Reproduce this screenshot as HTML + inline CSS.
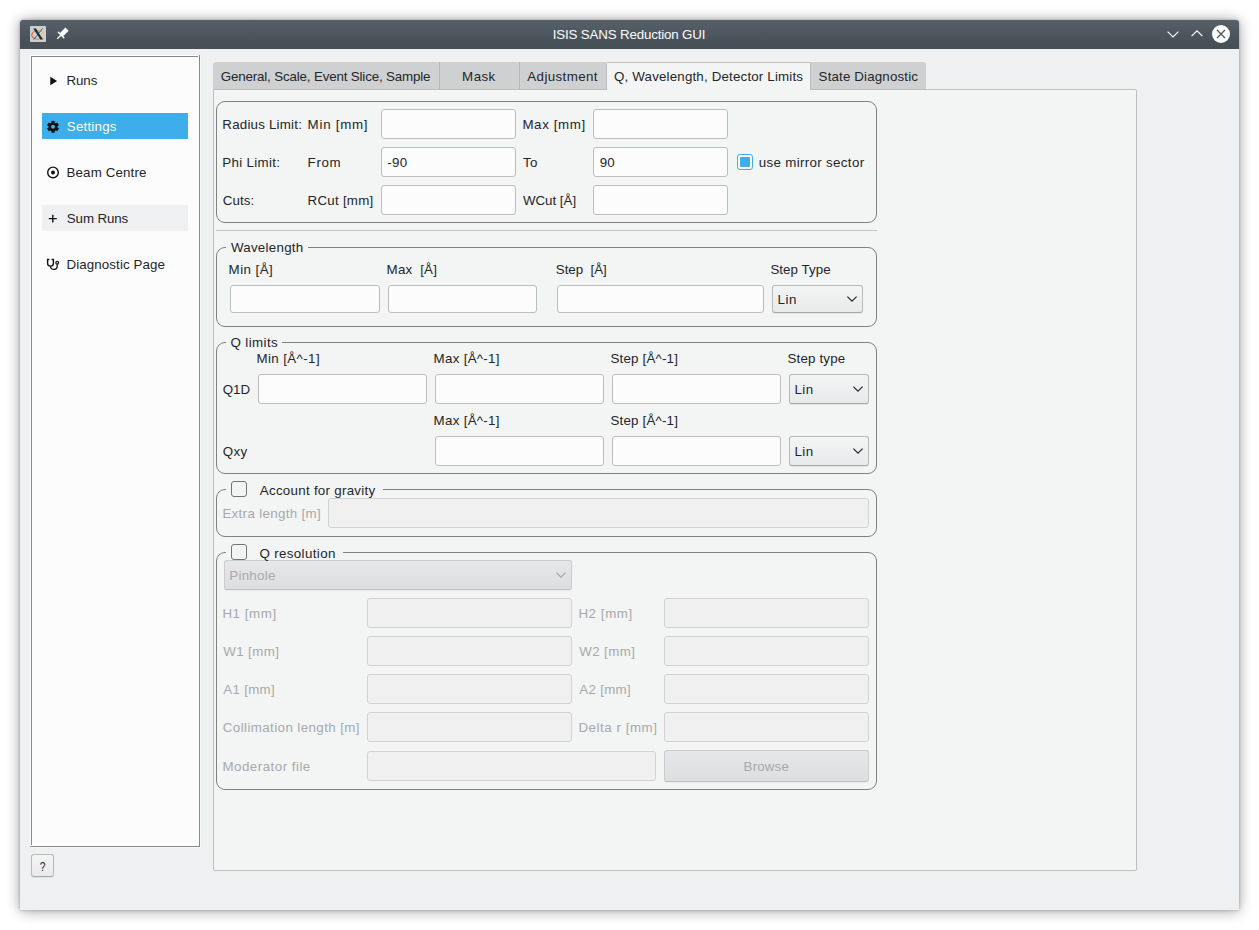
<!DOCTYPE html><html><head><meta charset="utf-8"><title>ISIS SANS Reduction GUI</title><style>
*{box-sizing:border-box}
html,body{margin:0;padding:0}
body{width:1259px;height:930px;overflow:hidden;background:#fff;position:relative;font-family:'Liberation Sans', 'DejaVu Sans', sans-serif;font-size:13.33px;color:#232629}
.a{position:absolute}
.t{position:absolute;line-height:16px;height:16px;white-space:pre}
.win{left:20px;top:20px;width:1219px;height:890px;background:#eff0f1;border-radius:3px 3px 0 0;box-shadow:0 0 14px rgba(0,0,0,.33),0 0 3px rgba(0,0,0,.27),0 4px 16px rgba(0,0,0,.07)}
.tb{left:20px;top:20px;width:1219px;height:29px;border-radius:3px 3px 0 0;background:linear-gradient(#566069 0%,#475057 80%)}
.le{position:absolute;background:#fcfcfc;border:1px solid #bcbdbe;border-radius:3px}
.led{position:absolute;background:#f0f0f0;border:1px solid #d0d2d4;border-radius:3px}
.btn{position:absolute;border:1px solid #b7b9ba;border-bottom-color:#a6a8aa;border-radius:3px;background:linear-gradient(#f3f4f4,#e8e9ea);box-shadow:0 1px 1px rgba(0,0,0,.07)}
.btnd{position:absolute;border:1px solid #cbcccd;border-bottom-color:#bfc0c2;border-radius:3px;background:linear-gradient(#e6e7e8,#dddedf);box-shadow:0 1px 1px rgba(0,0,0,.05)}
.gb{position:absolute;border:1px solid #808080;border-radius:9px}
.cov{position:absolute;background:#f3f4f4;height:3px}
.cb{position:absolute;width:16px;height:16px;border:1px solid #717477;border-radius:3px;background:#f3f4f4}
.tab{position:absolute;top:62px;height:27px;background:#cfd0d1}
.sep{position:absolute;top:62px;height:27px;width:1px;background:#b6b7b8}
svg{position:absolute;overflow:visible}
</style></head><body>
<div class="a win"></div>
<div class="a tb"></div>
<svg style="left:30px;top:26px" width="16" height="16" viewBox="0 0 16 16">
<defs><linearGradient id="og" x1="0" x2="1" y1="0" y2="0"><stop offset="0" stop-color="#e9501a"/><stop offset="0.55" stop-color="#f08a3c"/><stop offset="1" stop-color="#f3cf8a"/></linearGradient></defs>
<rect width="16" height="16" rx="1" fill="#c8d0d5"/>
<ellipse cx="8" cy="8.9" rx="6.2" ry="4.3" fill="none" stroke="url(#og)" stroke-width="1.1" opacity=".92"/>
<path d="M3.2 2.6 L6 2.6 L13 13.4 L10.4 13.4 Z" fill="#24282b"/>
<path d="M12.6 2.4 L3.6 13.6" stroke="#3a3f43" stroke-width="0.8"/>
</svg>
<svg style="left:55px;top:26px" width="16" height="16" viewBox="0 0 16 16"><g transform="translate(7.5 7.6) rotate(45)" stroke="#fcfcfc" fill="#fcfcfc">
<line x1="0" y1="7.4" x2="0" y2="2" stroke-width="1.3"/><line x1="-3.9" y1="2" x2="3.9" y2="2" stroke-width="1.4" stroke-linecap="round"/><rect x="-2.3" y="-6.4" width="4.6" height="8.4" stroke="none"/></g></svg>
<svg style="left:1160px;top:20px" width="79" height="29" viewBox="0 0 79 29">
<polyline points="7.6,11.6 13,17 18.4,11.6" fill="none" stroke="#fcfcfc" stroke-width="1.2"/>
<polyline points="31.6,16.2 37,10.8 42.4,16.2" fill="none" stroke="#fcfcfc" stroke-width="1.2"/>
<circle cx="61" cy="14" r="9" fill="#fcfcfc"/>
<path d="M57 10 L65 18 M65 10 L57 18" stroke="#475057" stroke-width="1.1" fill="none"/>
</svg>
<div class="a" style="left:30px;top:55px;width:171px;height:793px;background:#f6f7f7"></div>
<div class="a" style="left:30px;top:55px;width:169px;height:791px;background:#fff"></div>
<div class="a" style="left:32px;top:57px;width:166px;height:788px;background:#fcfcfc"></div>
<div class="a" style="left:31px;top:56px;width:167px;height:1px;background:#84898d"></div>
<div class="a" style="left:31px;top:56px;width:1px;height:789px;background:#84898d"></div>
<div class="a" style="left:30px;top:846px;width:170px;height:1px;background:#84898d"></div>
<div class="a" style="left:199px;top:55px;width:1px;height:792px;background:#84898d"></div>
<div class="a" style="left:42px;top:113px;width:146px;height:26px;background:#3daee9"></div>
<div class="a" style="left:42px;top:205px;width:146px;height:26px;background:#eff0f1"></div>
<svg style="left:44px;top:72px" width="18" height="18" viewBox="0 0 18 18"><path d="M6.3 4.8 L13.1 9 L6.3 13.2 Z" fill="#111"/></svg>
<svg style="left:44px;top:118px" width="18" height="18" viewBox="0 0 18 18"><g transform="translate(9 8.8)" fill="#111"><circle r="4.4"/><rect x="-1.7" y="-5.9" width="3.4" height="3" transform="rotate(0)"/><rect x="-1.7" y="-5.9" width="3.4" height="3" transform="rotate(60)"/><rect x="-1.7" y="-5.9" width="3.4" height="3" transform="rotate(120)"/><rect x="-1.7" y="-5.9" width="3.4" height="3" transform="rotate(180)"/><rect x="-1.7" y="-5.9" width="3.4" height="3" transform="rotate(240)"/><rect x="-1.7" y="-5.9" width="3.4" height="3" transform="rotate(300)"/><circle r="2" fill="#3daee9"/></g></svg>
<svg style="left:44px;top:164px" width="18" height="18" viewBox="0 0 18 18"><circle cx="9" cy="8.4" r="5.3" fill="none" stroke="#111" stroke-width="1.4"/><circle cx="9" cy="8.4" r="2" fill="#111"/></svg>
<svg style="left:44px;top:210px" width="18" height="18" viewBox="0 0 18 18"><path d="M4.8 8.6 H12.8 M8.8 4.7 V12.5" stroke="#111" stroke-width="1.4" fill="none"/></svg>
<svg style="left:44px;top:256px" width="18" height="18" viewBox="0 0 18 18"><path d="M5.4 3.5 H3.6 V7.2 A2.9 2.9 0 0 0 9.4 7.2 V3.5 H7.6" fill="none" stroke="#111" stroke-width="1.4"/><path d="M6.5 10.2 C6.7 12.6 8.4 13.4 10 13.4 C12 13.4 13.2 12.2 13.2 10 V8.2" fill="none" stroke="#111" stroke-width="1.3"/><circle cx="13.2" cy="6.7" r="1.4" fill="none" stroke="#111" stroke-width="1.2"/></svg>
<div class="btn" style="left:31px;top:854px;width:23px;height:23px"></div>
<div class="a" style="left:213px;top:89px;width:924px;height:782px;background:#f3f4f4;border:1px solid #bcbdbe;border-radius:0 2px 2px 2px"></div>
<div class="tab" style="left:213px;width:393px;border-radius:3px 0 0 0"></div>
<div class="tab" style="left:811px;width:115px;border-radius:0 3px 0 0"></div>
<div class="sep" style="left:439px"></div><div class="sep" style="left:519px"></div>
<div class="a" style="left:606px;top:62px;width:205px;height:28px;background:#f3f4f4;border:1px solid #bcbdbe;border-bottom:none;border-radius:2px 2px 0 0"></div>
<div class="gb" style="left:216px;top:101px;width:661px;height:122px"></div>
<div class="le" style="left:381px;top:109px;width:135px;height:30px"></div>
<div class="le" style="left:593px;top:109px;width:135px;height:30px"></div>
<div class="le" style="left:381px;top:147px;width:135px;height:30px"></div>
<div class="le" style="left:593px;top:147px;width:135px;height:30px"></div>
<div class="le" style="left:381px;top:185px;width:135px;height:30px"></div>
<div class="le" style="left:593px;top:185px;width:135px;height:30px"></div>
<div class="a" style="left:737px;top:154px;width:16px;height:16px;border:1px solid #3daee9;border-radius:3px;background:#fcfcfc"></div>
<div class="a" style="left:740px;top:157px;width:10px;height:10px;background:#3daee9;border-radius:1px"></div>
<div class="a" style="left:216px;top:230px;width:661px;height:1px;background:#c2c3c4"></div>
<div class="gb" style="left:216px;top:247px;width:661px;height:80px"></div>
<div class="cov" style="left:226px;top:246px;width:82px"></div>
<div class="le" style="left:230px;top:285px;width:150px;height:28px"></div>
<div class="le" style="left:388px;top:285px;width:149px;height:28px"></div>
<div class="le" style="left:557px;top:285px;width:207px;height:28px"></div>
<div class="btn" style="left:772px;top:285px;width:91px;height:28px"></div>
<svg style="left:846px;top:295px" width="12" height="8" viewBox="0 0 12 8"><polyline points="1.4,1.6 6,6.2 10.6,1.6" fill="none" stroke="#232629" stroke-width="1.15"/></svg>
<div class="gb" style="left:216px;top:342px;width:661px;height:132px"></div>
<div class="cov" style="left:226px;top:341px;width:56px"></div>
<div class="le" style="left:258px;top:374px;width:169px;height:30px"></div>
<div class="le" style="left:435px;top:374px;width:169px;height:30px"></div>
<div class="le" style="left:612px;top:374px;width:169px;height:30px"></div>
<div class="btn" style="left:789px;top:374px;width:80px;height:30px"></div>
<svg style="left:852px;top:385px" width="12" height="8" viewBox="0 0 12 8"><polyline points="1.4,1.6 6,6.2 10.6,1.6" fill="none" stroke="#232629" stroke-width="1.15"/></svg>
<div class="le" style="left:435px;top:436px;width:169px;height:30px"></div>
<div class="le" style="left:612px;top:436px;width:169px;height:30px"></div>
<div class="btn" style="left:789px;top:436px;width:80px;height:30px"></div>
<svg style="left:852px;top:447px" width="12" height="8" viewBox="0 0 12 8"><polyline points="1.4,1.6 6,6.2 10.6,1.6" fill="none" stroke="#232629" stroke-width="1.15"/></svg>
<div class="gb" style="left:216px;top:489px;width:661px;height:48px"></div>
<div class="cov" style="left:226px;top:488px;width:157px"></div>
<div class="cb" style="left:231px;top:481px"></div>
<div class="led" style="left:328px;top:498px;width:541px;height:30px"></div>
<div class="gb" style="left:216px;top:552px;width:661px;height:238px"></div>
<div class="cov" style="left:226px;top:551px;width:117px"></div>
<div class="cb" style="left:231px;top:544px"></div>
<div class="btnd" style="left:224px;top:560px;width:348px;height:30px"></div>
<svg style="left:555px;top:571px" width="12" height="8" viewBox="0 0 12 8"><polyline points="1.4,1.6 6,6.2 10.6,1.6" fill="none" stroke="#a3a5a7" stroke-width="1.15"/></svg>
<div class="led" style="left:367px;top:598px;width:205px;height:30px"></div>
<div class="led" style="left:664px;top:598px;width:205px;height:30px"></div>
<div class="led" style="left:367px;top:636px;width:205px;height:30px"></div>
<div class="led" style="left:664px;top:636px;width:205px;height:30px"></div>
<div class="led" style="left:367px;top:674px;width:205px;height:30px"></div>
<div class="led" style="left:664px;top:674px;width:205px;height:30px"></div>
<div class="led" style="left:367px;top:712px;width:205px;height:30px"></div>
<div class="led" style="left:664px;top:712px;width:205px;height:30px"></div>
<div class="led" style="left:367px;top:751px;width:289px;height:30px"></div>
<div class="btnd" style="left:664px;top:750px;width:205px;height:32px"></div>
<div class="t" style="left:552.8px;top:27px;color:#fcfcfc;letter-spacing:-0.167px">ISIS SANS Reduction GUI</div>
<div class="t" style="left:66.5px;top:73px;letter-spacing:-0.108px">Runs</div>
<div class="t" style="left:66.8px;top:119px;color:#fcfcfc;letter-spacing:0.208px">Settings</div>
<div class="t" style="left:66.5px;top:165px;letter-spacing:0.141px">Beam Centre</div>
<div class="t" style="left:66.8px;top:211px;letter-spacing:-0.107px">Sum Runs</div>
<div class="t" style="left:66.5px;top:257px;letter-spacing:0.102px">Diagnostic Page</div>
<div class="t" style="left:220.7px;top:69px;letter-spacing:-0.147px">General, Scale, Event Slice, Sample</div>
<div class="t" style="left:462.1px;top:69px;letter-spacing:0.437px">Mask</div>
<div class="t" style="left:527.3px;top:69px;letter-spacing:0.392px">Adjustment</div>
<div class="t" style="left:614.0px;top:69px;letter-spacing:0.175px">Q, Wavelength, Detector Limits</div>
<div class="t" style="left:818.6px;top:69px;letter-spacing:0.152px">State Diagnostic</div>
<div class="t" style="left:222.3px;top:117px;letter-spacing:0.213px">Radius Limit:</div>
<div class="t" style="left:307.6px;top:117px;letter-spacing:0.734px">Min [mm]</div>
<div class="t" style="left:522.4px;top:117px;letter-spacing:0.624px">Max [mm]</div>
<div class="t" style="left:222.3px;top:155px;letter-spacing:0.33px">Phi Limit:</div>
<div class="t" style="left:307.6px;top:155px;letter-spacing:0.657px">From</div>
<div class="t" style="left:522.9px;top:155px;letter-spacing:0.396px">To</div>
<div class="t" style="left:387.3px;top:155px;letter-spacing:0.359px">-90</div>
<div class="t" style="left:599.7px;top:155px;letter-spacing:0.133px">90</div>
<div class="t" style="left:758.8px;top:155px;letter-spacing:0.331px">use mirror sector</div>
<div class="t" style="left:222.7px;top:193px;letter-spacing:0.095px">Cuts:</div>
<div class="t" style="left:307.6px;top:193px;letter-spacing:0.243px">RCut [mm]</div>
<div class="t" style="left:522.9px;top:193px;letter-spacing:-0.008px">WCut [Å]</div>
<div class="t" style="left:230.9px;top:240px;letter-spacing:0.272px">Wavelength</div>
<div class="t" style="left:228.6px;top:262px;letter-spacing:0.444px">Min [Å]</div>
<div class="t" style="left:386.6px;top:262px;letter-spacing:0.195px">Max  [Å]</div>
<div class="t" style="left:555.8px;top:262px;letter-spacing:-0.024px">Step  [Å]</div>
<div class="t" style="left:770.4px;top:262px;letter-spacing:0.052px">Step Type</div>
<div class="t" style="left:777.5px;top:292px;letter-spacing:0.518px">Lin</div>
<div class="t" style="left:230.4px;top:335px;letter-spacing:0.406px">Q limits</div>
<div class="t" style="left:256.4px;top:351px;letter-spacing:0.405px">Min [Å^-1]</div>
<div class="t" style="left:433.6px;top:351px;letter-spacing:0.292px">Max [Å^-1]</div>
<div class="t" style="left:610.5px;top:351px;letter-spacing:0.185px">Step [Å^-1]</div>
<div class="t" style="left:787.5px;top:351px;letter-spacing:0.174px">Step type</div>
<div class="t" style="left:222.7px;top:382px;letter-spacing:0.018px">Q1D</div>
<div class="t" style="left:794.4px;top:382px;letter-spacing:0.518px">Lin</div>
<div class="t" style="left:433.6px;top:413px;letter-spacing:0.292px">Max [Å^-1]</div>
<div class="t" style="left:610.5px;top:413px;letter-spacing:0.185px">Step [Å^-1]</div>
<div class="t" style="left:222.7px;top:444px;letter-spacing:0.345px">Qxy</div>
<div class="t" style="left:794.4px;top:444px;letter-spacing:0.518px">Lin</div>
<div class="t" style="left:259.8px;top:483px;letter-spacing:0.279px">Account for gravity</div>
<div class="t" style="left:222.4px;top:506px;color:#a7aaad;letter-spacing:0.324px">Extra length [m]</div>
<div class="t" style="left:259.4px;top:546px;letter-spacing:0.371px">Q resolution</div>
<div class="t" style="left:229.2px;top:568px;color:#a7aaad;letter-spacing:0.301px">Pinhole</div>
<div class="t" style="left:222.4px;top:606px;color:#a7aaad;letter-spacing:0.561px">H1 [mm]</div>
<div class="t" style="left:578.4px;top:606px;color:#a7aaad;letter-spacing:0.578px">H2 [mm]</div>
<div class="t" style="left:223.3px;top:644px;color:#a7aaad;letter-spacing:0.374px">W1 [mm]</div>
<div class="t" style="left:579.2px;top:644px;color:#a7aaad;letter-spacing:0.391px">W2 [mm]</div>
<div class="t" style="left:223.3px;top:682px;color:#a7aaad;letter-spacing:0.3px">A1 [mm]</div>
<div class="t" style="left:579.2px;top:682px;color:#a7aaad;letter-spacing:0.316px">A2 [mm]</div>
<div class="t" style="left:222.8px;top:720px;color:#a7aaad;letter-spacing:0.407px">Collimation length [m]</div>
<div class="t" style="left:578.4px;top:720px;color:#a7aaad;letter-spacing:0.542px">Delta r [mm]</div>
<div class="t" style="left:222.4px;top:759px;color:#a7aaad;letter-spacing:0.493px">Moderator file</div>
<div class="t" style="left:743.6px;top:759px;color:#a7aaad;letter-spacing:0.162px">Browse</div>
<div class="t" style="left:38.9px;top:859px;transform:scaleX(.78);transform-origin:3.5px 0">?</div>
</body></html>
